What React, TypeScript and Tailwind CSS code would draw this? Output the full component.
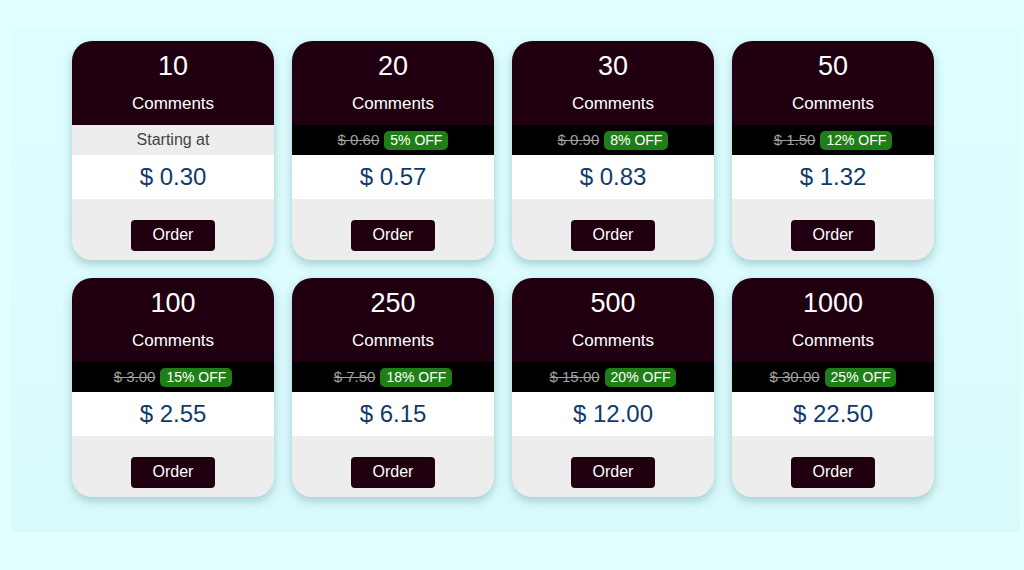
const packages = [
  { qty: 10, old: null, off: null, price: "0.30" },
  { qty: 20, old: "0.60", off: "5% OFF", price: "0.57" },
  { qty: 30, old: "0.90", off: "8% OFF", price: "0.83" },
  { qty: 50, old: "1.50", off: "12% OFF", price: "1.32" },
  { qty: 100, old: "3.00", off: "15% OFF", price: "2.55" },
  { qty: 250, old: "7.50", off: "18% OFF", price: "6.15" },
  { qty: 500, old: "15.00", off: "20% OFF", price: "12.00" },
  { qty: 1000, old: "30.00", off: "25% OFF", price: "22.50" },
]

function PackageCard({ pkg }: { pkg: (typeof packages)[number] }) {
  return (
    <div className="w-[202px] h-[219px] rounded-[20px] overflow-hidden flex flex-col bg-[#ededed] shadow-[0_4px_10px_rgba(60,120,130,0.35)]">
      <div className="h-[84px] bg-[#200010] text-white flex flex-col items-center">
        <p className="text-[27px] leading-none mt-[12px]">{pkg.qty}</p>
        <p className="text-[17px] leading-none mt-[15px]">Comments</p>
      </div>
      {pkg.old ? (
        <div className="h-[30px] bg-black flex items-center justify-center gap-[5px]">
          <span className="text-[15px] text-[#a0a0a0] line-through">$ {pkg.old}</span>
          <span className="text-[14px] text-white bg-[#1f7f16] rounded-[5px] px-[6px] leading-[19px]">{pkg.off}</span>
        </div>
      ) : (
        <div className="h-[30px] bg-[#ededed] flex items-center justify-center text-[16px] text-[#444]">Starting at</div>
      )}
      <div className="h-[44px] bg-white flex items-center justify-center text-[24px] text-[#113a6b]">
        $ {pkg.price}
      </div>
      <div className="flex-1 flex items-center justify-center">
        <button className="w-[84px] h-[31px] bg-[#200010] text-white text-[16px] rounded-[4px] mt-[11px] cursor-pointer">Order</button>
      </div>
    </div>
  )
}

function App() {
  return (
    <div className="min-h-[570px] bg-[#e0ffff] pt-[30px] font-['Liberation_Sans',Arial,sans-serif]">
      <div className="ml-[11px] mr-[4px] h-[502px] bg-gradient-to-b from-[#defdfe] to-[#d9fafb] pl-[61px] pt-[11px]">
        <div className="grid grid-cols-[repeat(4,202px)] gap-x-[18px] gap-y-[18px]">
          {packages.map((pkg) => (
            <PackageCard key={pkg.qty} pkg={pkg} />
          ))}
        </div>
      </div>
    </div>
  )
}

export default App
